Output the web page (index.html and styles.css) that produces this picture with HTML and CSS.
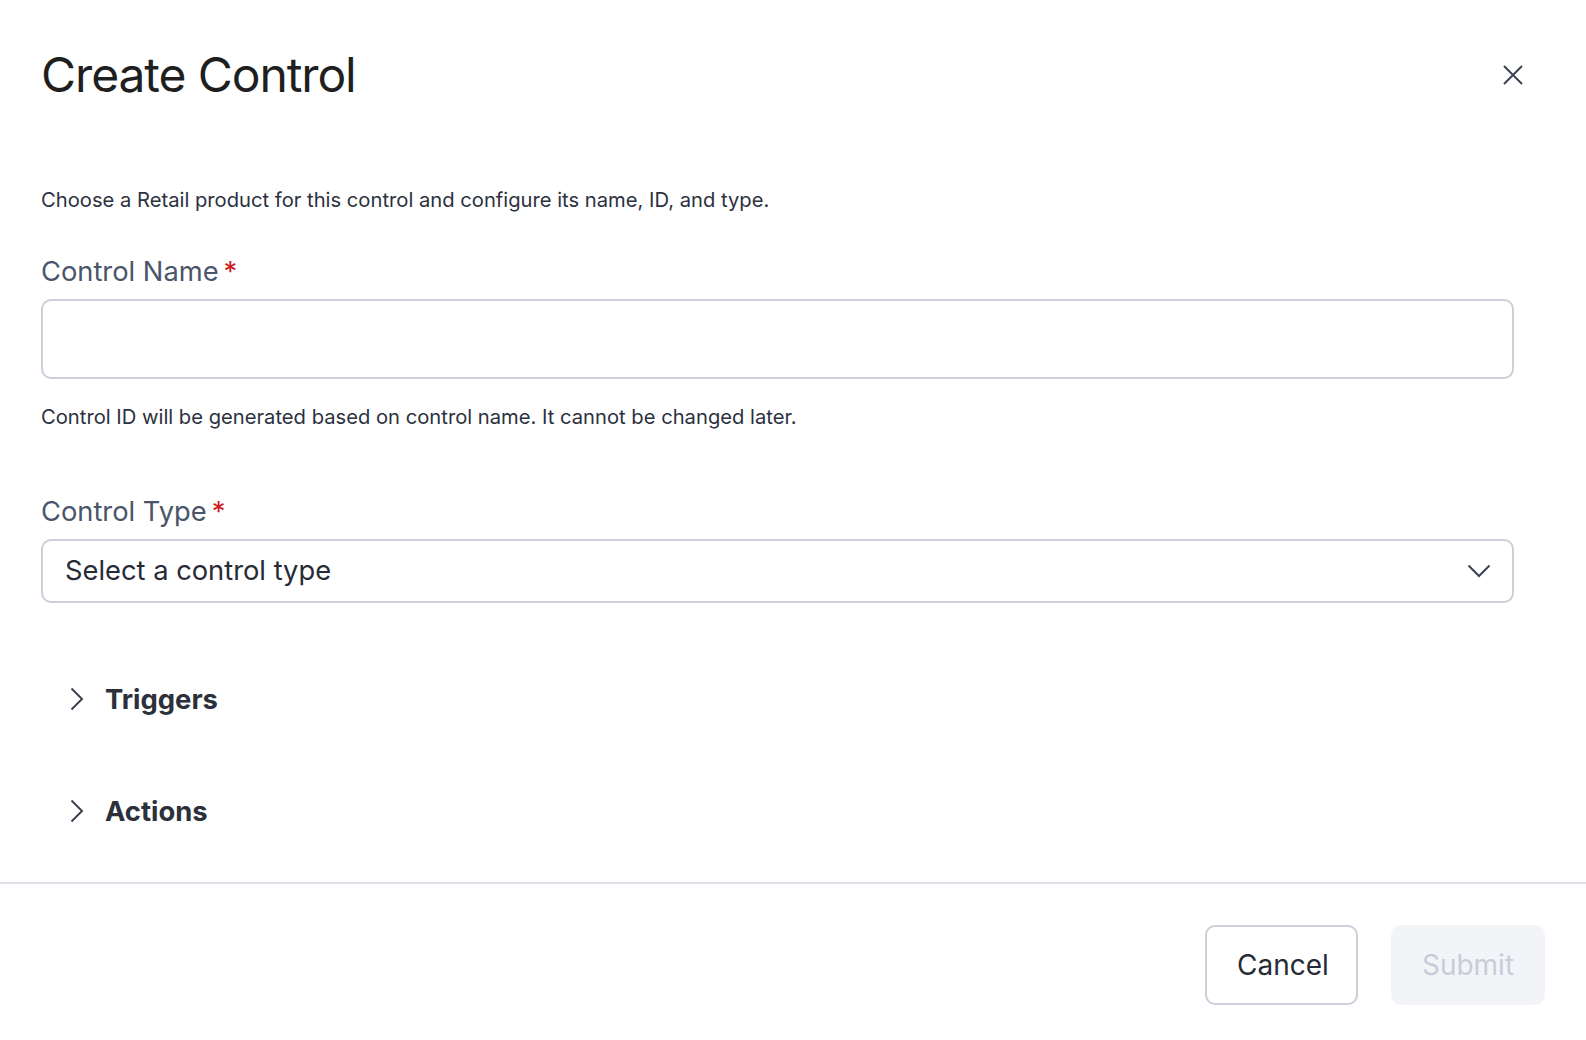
FILE: index.html
```html
<!DOCTYPE html>
<html lang="en">
<head>
<meta charset="utf-8">
<title>Create Control</title>
<link rel="stylesheet" href="styles.css">
</head>
<body>
<div class="modal">
  <header class="modal-header">
    <h1 class="modal-title">Create Control</h1>
    <button class="close-btn" aria-label="Close">
      <svg width="22" height="22" viewBox="0 0 22 22"><path d="M2 2 L20 20 M20 2 L2 20" fill="none" stroke="#3d4250" stroke-width="2"/></svg>
    </button>
  </header>
  <main class="modal-body">
    <p class="intro">Choose a Retail product for this control and configure its name, ID, and type.</p>
    <label class="field-label">Control Name<span class="req">*</span></label>
    <div class="text-input"></div>
    <p class="hint">Control ID will be generated based on control name. It cannot be changed later.</p>
    <label class="field-label field-label-second">Control Type<span class="req">*</span></label>
    <div class="select-input">
      <span class="select-text">Select a control type</span>
      <svg class="select-chevron" width="24" height="14" viewBox="0 0 24 14"><path d="M1.5 1.5 L12 12 L22.5 1.5" fill="none" stroke="#3d4250" stroke-width="2"/></svg>
    </div>
    <div class="section-row section-first">
      <svg class="section-chevron" width="14" height="24" viewBox="0 0 14 24"><path d="M1.5 1.5 L12 12 L1.5 22.5" fill="none" stroke="#3d4250" stroke-width="2"/></svg>
      <span class="section-title">Triggers</span>
    </div>
    <div class="section-row section-second">
      <svg class="section-chevron" width="14" height="24" viewBox="0 0 14 24"><path d="M1.5 1.5 L12 12 L1.5 22.5" fill="none" stroke="#3d4250" stroke-width="2"/></svg>
      <span class="section-title">Actions</span>
    </div>
  </main>
  <footer class="modal-footer">
    <button class="btn btn-cancel">Cancel</button>
    <button class="btn btn-submit" disabled>Submit</button>
  </footer>
</div>
</body>
</html>
```
FILE: styles.css
```css
* { box-sizing: border-box; }
html, body { margin: 0; padding: 0; background: #ffffff; }
body { font-family: Inter, "Noto Sans", sans-serif; color: #2c3140; }

.modal { width: 1586px; height: 1040px; display: flex; flex-direction: column; }

.modal-header {
  display: flex;
  align-items: center;
  justify-content: space-between;
  padding: 46px 62px 0 41px;
}
.modal-title {
  margin: 0;
  font-size: 48px;
  line-height: 58px;
  font-weight: 400;
  color: #1f1f1f;
  letter-spacing: -1.1px;
}
.close-btn {
  border: 0;
  background: none;
  padding: 0;
  width: 22px;
  height: 22px;
  display: flex;
}

.modal-body {
  flex: 1;
  padding: 0 72px 0 41px;
}
.intro {
  margin: 81px 0 0;
  font-size: 20.2px;
  line-height: 30px;
  color: #2c3140;
}
.field-label {
  display: block;
  margin-top: 39px;
  font-size: 27.3px;
  line-height: 36px;
  color: #4b556a;
}
.field-label-second { margin-top: 62px; }
.req { color: #d11a1a; margin-left: 5px; }

.text-input {
  margin-top: 9px;
  height: 80px;
  border: 2px solid #cbcfda;
  border-radius: 10px;
}
.hint {
  margin: 23px 0 0;
  font-size: 20.2px;
  line-height: 30px;
  color: #2c3140;
}
.select-input {
  margin-top: 9px;
  height: 64px;
  border: 2px solid #cbcfda;
  border-radius: 10px;
  display: flex;
  align-items: center;
  justify-content: space-between;
  padding: 0 21px 0 22px;
}
.select-text {
  font-size: 27.3px;
  line-height: 36px;
  color: #262b36;
}
.section-row {
  display: flex;
  align-items: center;
  height: 40px;
  padding-left: 29px;
}
.section-first { margin-top: 76px; }
.section-second { margin-top: 72px; }
.section-chevron { margin-right: 21px; }
.section-title {
  font-size: 27.4px;
  line-height: 40px;
  font-weight: 700;
  color: #2b303b;
}

.modal-footer {
  border-top: 2px solid #dcdfe7;
  display: flex;
  justify-content: flex-end;
  gap: 33px;
  padding: 41px 41px 35px;
}
.btn {
  font-family: Inter, "Noto Sans", sans-serif;
  font-size: 28px;
  height: 80px;
  border-radius: 10px;
  padding: 0 30px;
}
.btn-cancel {
  width: 153px;
  background: #ffffff;
  border: 2px solid #cbcfda;
  color: #262b36;
}
.btn-submit {
  width: 154px;
  background: #f3f4f8;
  border: 0;
  color: #c8ccd8;
}
```
